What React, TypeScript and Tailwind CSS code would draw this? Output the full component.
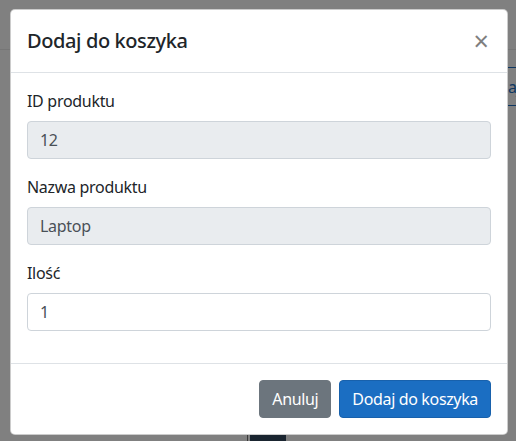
import React from 'react'

const font = { fontFamily: '"Noto Sans", "Open Sans", sans-serif' }

function Field({ label, value, disabled = false }: { label: string; value: string; disabled?: boolean }) {
  return (
    <div className="mb-4">
      <label className="mb-2 block text-[16px] leading-6 tracking-[-0.3px] text-[#212529]">{label}</label>
      <input
        type="text"
        value={value}
        readOnly
        disabled={disabled}
        className={
          'block h-[38px] w-full rounded-[4px] border border-[#ced4da] px-3 text-[16px] leading-6 tracking-[-0.3px] text-[#495057] outline-none ' +
          (disabled ? 'bg-[#e9ecef]' : 'bg-white')
        }
      />
    </div>
  )
}

export default function App() {
  return (
    <div className="relative flex h-[441px] w-[516px] flex-col overflow-hidden bg-[#808080]" style={font}>
      {/* page behind the backdrop */}
      <div className="h-[50px] shrink-0 border-b border-[#767676]" />
      <div className="flex justify-end pt-[17px]">
        <div className="-mr-[18px] flex h-[39px] items-center border border-[#0e3761] px-3 text-[16px] text-[#0e3761]">
          Dodaj
        </div>
      </div>
      <div className="mt-auto flex items-end gap-[2px] pl-[247px]">
        <div className="h-[7px] w-px bg-[#3a3a3a]" />
        <div className="h-[11px] w-[36px] rounded-t-[3px] bg-[#1a2530]" />
      </div>

      {/* modal */}
      <div className="absolute left-[10px] top-[9px] w-[498px] rounded-[5px] border border-black/20 bg-white">
        <div className="flex items-start justify-between border-b border-[#dee2e6] p-4">
          <h5 className="text-[20px] font-medium leading-[30px] tracking-[-0.4px] text-[#212529]">Dodaj do koszyka</h5>
          <button className="-mb-4 -mr-[14px] -mt-[15px] p-4 text-[27px] font-normal leading-none text-black opacity-50">
            ×
          </button>
        </div>
        <div className="p-4 pb-0">
          <Field label="ID produktu" value="12" disabled />
          <Field label="Nazwa produktu" value="Laptop" disabled />
          <Field label="Ilość" value="1" />
          <div className="h-4" />
        </div>
        <div className="flex items-center justify-end gap-2 border-t border-[#dee2e6] p-4">
          <button className="h-[38px] rounded-[4px] border border-[#6c757d] bg-[#6c757d] px-3 text-[16px] tracking-[-0.35px] text-white">
            Anuluj
          </button>
          <button className="h-[38px] rounded-[4px] border border-[#1861ac] bg-[#1b6ec2] px-3 text-[16px] tracking-[-0.35px] text-white">
            Dodaj do koszyka
          </button>
        </div>
      </div>
    </div>
  )
}
